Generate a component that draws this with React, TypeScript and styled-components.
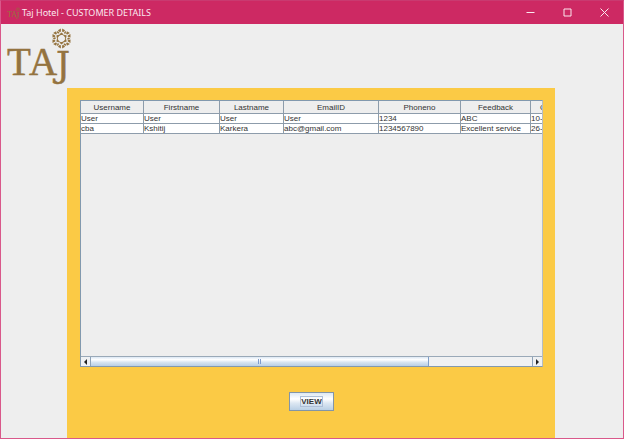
import React from "react";
import styled, { createGlobalStyle } from "styled-components";

const GlobalStyle = createGlobalStyle`
  *, *::before, *::after { box-sizing: border-box; }
  body { margin: 0; background: #eeeeee; }
  button { font: inherit; color: inherit; padding: 0; margin: 0; border: 0; background: none; }
`;

const Frame = styled.div`
  display: flex;
  flex-direction: column;
  min-height: 100vh;
  border: 1px solid #d9588a;
  border-top-color: #c93a70;
  background: #eeeeee;
  font: 8px/9px "Liberation Sans", Arial, sans-serif;
  color: #333333;
`;

const TitleBar = styled.header`
  display: flex;
  align-items: center;
  height: 23px;
  padding-left: 6px;
  background: #cd2963;
  color: #fbe8ef;
`;

const Title = styled.h1`
  flex: 1;
  margin: 0 0 0 2px;
  font: 400 9px/12px "Noto Sans", "Open Sans", sans-serif;
  white-space: nowrap;
`;

const WindowButton = styled.button`
  display: flex;
  align-items: center;
  justify-content: center;
  width: 37px;
  height: 23px;
`;

const Brand = styled.div`
  height: 64px;
  padding: 4px 0 0 5px;
`;

const Panel = styled.main`
  display: flex;
  flex: 1;
  flex-direction: column;
  align-items: center;
  margin: 0 68px 0 66px;
  padding: 12px 12px 27px 13px;
  background: #fbca45;
`;

const ScrollPane = styled.section`
  display: flex;
  flex: 1;
  flex-direction: column;
  width: 100%;
  min-width: 0;
  border: 1px solid #8299ae;
  border-right-color: #b5bdc3;
  background: #eeeeee;
`;

const Viewport = styled.div`
  flex: 1;
  overflow: hidden;
`;

const Table = styled.table`
  table-layout: fixed;
  width: 498px;
  border-collapse: separate;
  border-spacing: 0;
`;

const Column = styled.col<{ $width: number }>`
  width: ${(p) => p.$width}px;
`;

const HeadCell = styled.th<{ $clipped?: boolean }>`
  height: 13px;
  padding: ${(p) => (p.$clipped ? "0 0 0 9px" : "0")};
  border-right: 1px solid #8d9cab;
  border-bottom: 1px solid #8d9cab;
  font-weight: 400;
  text-align: ${(p) => (p.$clipped ? "left" : "center")};
  white-space: nowrap;
`;

const Cell = styled.td`
  height: 10px;
  padding: 0;
  border-right: 1px solid #8d9cab;
  border-bottom: 1px solid #8d9cab;
  background: #ffffff;
  white-space: nowrap;
`;

const ScrollBar = styled.div`
  display: flex;
  height: 10px;
  border-top: 1px solid #9aa9b8;
  background: #f0f1f2;
`;

const ArrowButton = styled.button<{ $side: "left" | "right" }>`
  display: flex;
  align-items: center;
  justify-content: center;
  width: 10px;
  border-${(p) => (p.$side === "left" ? "right" : "left")}: 1px solid #8fa3b8;
  background: #eff1f3;
`;

const Track = styled.div`
  display: flex;
  flex: 1;
`;

const Thumb = styled.div`
  display: flex;
  align-items: center;
  justify-content: center;
  gap: 1px;
  width: 338px;
  border-right: 1px solid #7f9ec8;
  background: linear-gradient(#dce8f4 0%, #ffffff 30%, #d8e5f2 58%, #b9cfe6 100%);
`;

const Grip = styled.span`
  width: 1px;
  height: 5px;
  background: #7f9bcc;
`;

const ViewButton = styled.button`
  height: 19px;
  margin-top: 25px;
  padding: 0 11px;
  border: 1px solid #8295a8;
  background: linear-gradient(#dde8f3 0%, #ffffff 35%, #dce7f2 60%, #b9cfe5 100%);
  font-weight: 700;
`;

const FocusLabel = styled.span`
  display: block;
  outline: 1px solid #aebfd8;
`;

const facets = [0, 60, 120, 180, 240, 300];

function TajLogo({ width, height }: { width: number; height: number }) {
  return (
    <svg width={width} height={height} viewBox="0 0 66 58" role="img" aria-label="Taj" fill="#94733f">
      <g transform="translate(55.5 10.5)">
        {facets.map((angle) => (
          <g key={angle} transform={`rotate(${angle})`}>
            <path d="M0.6-10 L3.6-8.3 L1.6-6.2 L0.6-7Z" />
            <path d="M-0.6-10 L-3.6-8.3 L-1.6-6.2 L-0.6-7Z" />
            <path d="M0-6 L1.9-4.2 L0-3.4 L-1.9-4.2Z" />
            <path d="M2.6-6.6 L4.4-7.6 L4.4-5.2 L3-4.4Z" />
            <path d="M0-4.5 L3.9-2.25" fill="none" stroke="#94733f" strokeWidth="0.9" />
          </g>
        ))}
      </g>
      <g fontFamily="Liberation Serif, Times New Roman, serif" fontSize="39" stroke="#94733f" strokeWidth="0.5">
        <text x="1" y="47">T</text>
        <text x="23" y="47">A</text>
        <text x="50" y="49" fontFamily="DejaVu Serif, serif" fontSize="35">J</text>
      </g>
    </svg>
  );
}

const columns = [
  { name: "Username", width: 63 },
  { name: "Firstname", width: 76 },
  { name: "Lastname", width: 64 },
  { name: "EmailID", width: 95 },
  { name: "Phoneno", width: 82 },
  { name: "Feedback", width: 70 },
  { name: "C", width: 48 },
];

const customers = [
  ["User", "User", "User", "User", "1234", "ABC", "10-"],
  ["cba", "Kshitij", "Karkera", "abc@gmail.com", "1234567890", "Excellent service", "26-"],
];

export default function App() {
  return (
    <>
      <GlobalStyle />
      <Frame>
        <TitleBar>
          <TajLogo width={13} height={12} />
          <Title>Taj Hotel - CUSTOMER DETAILS</Title>
          <WindowButton aria-label="Minimize">
            <svg width="9" height="9" stroke="currentColor"><path d="M0.5 4.5H8.5" /></svg>
          </WindowButton>
          <WindowButton aria-label="Maximize">
            <svg width="9" height="9" fill="none" stroke="currentColor"><path d="M1 1H8V8H1Z" /></svg>
          </WindowButton>
          <WindowButton aria-label="Close">
            <svg width="9" height="9" stroke="currentColor"><path d="M0.5 0.5L8.5 8.5M8.5 0.5L0.5 8.5" /></svg>
          </WindowButton>
        </TitleBar>
        <Brand>
          <TajLogo width={66} height={58} />
        </Brand>
        <Panel>
          <ScrollPane aria-label="Customers">
            <Viewport>
              <Table>
                <colgroup>
                  {columns.map((c) => <Column key={c.name} $width={c.width} />)}
                </colgroup>
                <thead>
                  <tr>
                    {columns.map((c, i) => (
                      <HeadCell key={c.name} scope="col" $clipped={i === columns.length - 1}>{c.name}</HeadCell>
                    ))}
                  </tr>
                </thead>
                <tbody>
                  {customers.map((row) => (
                    <tr key={row[0]}>
                      {row.map((value, i) => <Cell key={columns[i].name}>{value}</Cell>)}
                    </tr>
                  ))}
                </tbody>
              </Table>
            </Viewport>
            <ScrollBar>
              <ArrowButton $side="left" aria-label="Scroll left">
                <svg width="3" height="6" fill="#222222"><path d="M3 0V6L0 3Z" /></svg>
              </ArrowButton>
              <Track>
                <Thumb><Grip /><Grip /></Thumb>
              </Track>
              <ArrowButton $side="right" aria-label="Scroll right">
                <svg width="3" height="6" fill="#222222"><path d="M0 0V6L3 3Z" /></svg>
              </ArrowButton>
            </ScrollBar>
          </ScrollPane>
          <ViewButton><FocusLabel>VIEW</FocusLabel></ViewButton>
        </Panel>
      </Frame>
    </>
  );
}
